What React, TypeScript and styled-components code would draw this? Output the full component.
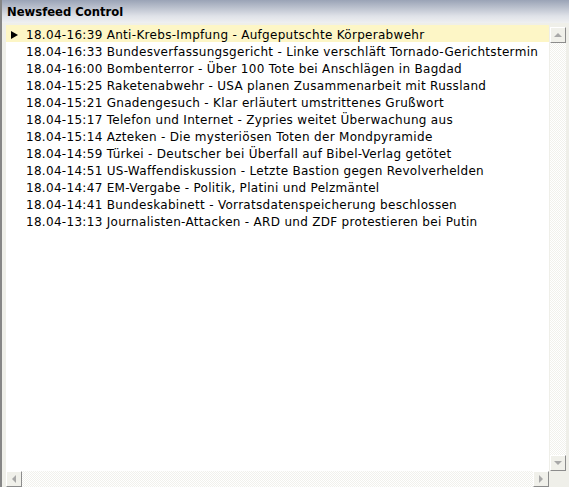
import React from "react";
import styled, { createGlobalStyle, css } from "styled-components";

const GlobalStyle = createGlobalStyle`
  html, body {
    margin: 0;
    padding: 0;
    background: #ffffff;
  }
`;

const news = [
  { time: "18.04-16:39", title: "Anti-Krebs-Impfung - Aufgeputschte Körperabwehr" },
  { time: "18.04-16:33", title: "Bundesverfassungsgericht - Linke verschläft Tornado-Gerichtstermin" },
  { time: "18.04-16:00", title: "Bombenterror - Über 100 Tote bei Anschlägen in Bagdad" },
  { time: "18.04-15:25", title: "Raketenabwehr - USA planen Zusammenarbeit mit Russland" },
  { time: "18.04-15:21", title: "Gnadengesuch - Klar erläutert umstrittenes Grußwort" },
  { time: "18.04-15:17", title: "Telefon und Internet - Zypries weitet Überwachung aus" },
  { time: "18.04-15:14", title: "Azteken - Die mysteriösen Toten der Mondpyramide" },
  { time: "18.04-14:59", title: "Türkei - Deutscher bei Überfall auf Bibel-Verlag getötet" },
  { time: "18.04-14:51", title: "US-Waffendiskussion - Letzte Bastion gegen Revolverhelden" },
  { time: "18.04-14:47", title: "EM-Vergabe - Politik, Platini und Pelzmäntel" },
  { time: "18.04-14:41", title: "Bundeskabinett - Vorratsdatenspeicherung beschlossen" },
  { time: "18.04-13:13", title: "Journalisten-Attacken - ARD und ZDF protestieren bei Putin" },
];

const Panel = styled.div`
  box-sizing: border-box;
  width: 569px;
  height: 487px;
  display: flex;
  flex-direction: column;
  background: #efefe9;
  border-left: 2px solid #868686;
  font-family: "DejaVu Sans", Verdana, sans-serif;
`;

const TitleBar = styled.div`
  height: 23px;
  line-height: 24px;
  padding-left: 5px;
  font-size: 11.6px;
  font-weight: bold;
  color: #000;
  background: linear-gradient(#9aa3b6, #dfe2e8 70%, #eff0f1);
`;

const Body = styled.div`
  flex: 1;
  display: grid;
  grid-template-columns: 1fr 16px;
  grid-template-rows: 1fr 16px;
  column-gap: 1px;
  padding: 2px 3px 0 4px;
  min-height: 0;
`;

const List = styled.div`
  background: #ffffff;
  overflow: hidden;
`;

const Row = styled.div<{ $active?: boolean }>`
  box-sizing: border-box;
  height: 17px;
  padding-top: 2px;
  display: flex;
  align-items: center;
  font-size: 12px;
  letter-spacing: 0.3px;
  color: #000;
  white-space: nowrap;
  background: ${(p) => (p.$active ? "#fdf6c6" : "transparent")};
`;

const MarkerCell = styled.div`
  width: 20px;
  flex: none;
  display: flex;
  align-items: center;
  padding-left: 5px;
  box-sizing: border-box;
`;

const Marker = styled.div`
  width: 0;
  height: 0;
  border-top: 4.5px solid transparent;
  border-bottom: 4.5px solid transparent;
  border-left: 7px solid #000;
`;

const track = css`
  background-color: #ffffff;
  background-image: repeating-conic-gradient(#f1f1ec 0% 25%, #ffffff 0% 50%);
  background-size: 2px 2px;
`;

const VScroll = styled.div`
  ${track}
  display: flex;
  flex-direction: column;
  justify-content: space-between;
  margin-top: 2px;
`;

const HScroll = styled.div`
  ${track}
  display: flex;
  justify-content: space-between;
`;

const Corner = styled.div`
  background: #efefe9;
`;

const ScrollButton = styled.div`
  box-sizing: border-box;
  width: 16px;
  height: 16px;
  flex: none;
  display: flex;
  align-items: center;
  justify-content: center;
  background: #f0f0ea;
  border-top: 1px solid #ffffff;
  border-left: 1px solid #ffffff;
  border-right: 1px solid #8c8c8c;
  border-bottom: 1px solid #8c8c8c;
`;

type Dir = "up" | "down" | "left" | "right";

const Arrow = styled.div<{ $dir: Dir }>`
  width: 0;
  height: 0;
  ${(p) =>
    p.$dir === "up"
      ? css`
          border-left: 4px solid transparent;
          border-right: 4px solid transparent;
          border-bottom: 4px solid #a8a8a8;
        `
      : p.$dir === "down"
      ? css`
          border-left: 4px solid transparent;
          border-right: 4px solid transparent;
          border-top: 4px solid #a8a8a8;
        `
      : p.$dir === "left"
      ? css`
          border-top: 4px solid transparent;
          border-bottom: 4px solid transparent;
          border-right: 4px solid #a8a8a8;
        `
      : css`
          border-top: 4px solid transparent;
          border-bottom: 4px solid transparent;
          border-left: 4px solid #a8a8a8;
        `}
`;

const App: React.FC = () => {
  return (
    <>
      <GlobalStyle />
      <Panel>
        <TitleBar>Newsfeed Control</TitleBar>
        <Body>
          <List>
            {news.map((n, i) => (
              <Row key={n.time} $active={i === 0}>
                <MarkerCell>{i === 0 && <Marker />}</MarkerCell>
                <span>
                  {n.time} {n.title}
                </span>
              </Row>
            ))}
          </List>
          <VScroll>
            <ScrollButton>
              <Arrow $dir="up" />
            </ScrollButton>
            <ScrollButton>
              <Arrow $dir="down" />
            </ScrollButton>
          </VScroll>
          <HScroll>
            <ScrollButton>
              <Arrow $dir="left" />
            </ScrollButton>
            <ScrollButton>
              <Arrow $dir="right" />
            </ScrollButton>
          </HScroll>
          <Corner />
        </Body>
      </Panel>
    </>
  );
};

export default App;
